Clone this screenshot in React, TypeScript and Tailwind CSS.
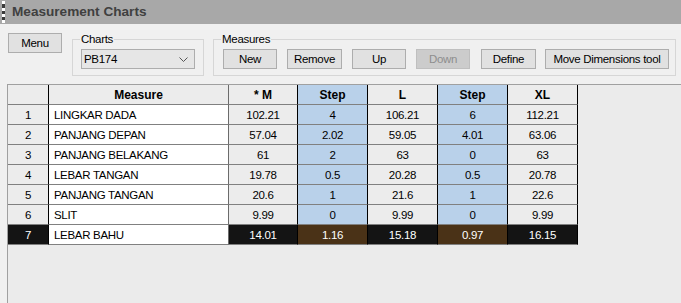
import React from 'react';

type Row = { n: string; name: string; vals: string[]; selected?: boolean };

const rows: Row[] = [
  { n: '1', name: 'LINGKAR DADA', vals: ['102.21', '4', '106.21', '6', '112.21'] },
  { n: '2', name: 'PANJANG DEPAN', vals: ['57.04', '2.02', '59.05', '4.01', '63.06'] },
  { n: '3', name: 'PANJANG BELAKANG', vals: ['61', '2', '63', '0', '63'] },
  { n: '4', name: 'LEBAR TANGAN', vals: ['19.78', '0.5', '20.28', '0.5', '20.78'] },
  { n: '5', name: 'PANJANG TANGAN', vals: ['20.6', '1', '21.6', '1', '22.6'] },
  { n: '6', name: 'SLIT', vals: ['9.99', '0', '9.99', '0', '9.99'] },
  { n: '7', name: 'LEBAR BAHU', vals: ['14.01', '1.16', '15.18', '0.97', '16.15'], selected: true },
];

const cell = 'h-[20px] flex items-center border-b border-b-[#808080] border-r';

// value columns: *M, Step, L, Step, XL
const valCls = [
  'w-[69px] bg-[#ececec] border-r-black justify-center',
  'w-[70px] bg-[#b9d1ea] border-r-black justify-center',
  'w-[70px] bg-[#ececec] border-r-black justify-center',
  'w-[70px] bg-[#b9d1ea] border-r-black justify-center',
  'w-[70px] bg-[#ececec] border-r-black justify-center',
];
const valSel = [
  'w-[69px] bg-[#141414] text-white border-r-black justify-center',
  'w-[70px] bg-[#4a3217] text-white border-r-black justify-center',
  'w-[70px] bg-[#141414] text-white border-r-black justify-center',
  'w-[70px] bg-[#4a3217] text-white border-r-black justify-center',
  'w-[70px] bg-[#141414] text-white border-r-black justify-center',
];

const Btn = ({ label, w, disabled }: { label: string; w: string; disabled?: boolean }) => (
  <div
    className={`${w} h-[20px] flex items-center justify-center whitespace-nowrap border ${
      disabled ? 'bg-[#cccccc] border-[#bfbfbf] text-[#8e8e8e]' : 'bg-[#e1e1e1] border-[#adadad] text-black'
    }`}
  >
    {label}
  </div>
);

export default function App() {
  return (
    <div className="w-[681px] h-[303px] flex flex-col bg-[#f0f0f0] text-[11.5px] tracking-[-0.3px] leading-[14px] text-black font-['Liberation_Sans',Arial,sans-serif] overflow-hidden">
      {/* title bar */}
      <div className="h-[24px] shrink-0 flex items-center bg-[#a8a8a8]">
        <div className="ml-[2px] h-[22px] w-[3px] border-l-[3px] border-dotted border-white bg-[#3a3a3a]" />
        <span className="ml-[7px] text-[13.6px] tracking-normal font-bold text-[#404040]">Measurement Charts</span>
      </div>

      {/* toolbar */}
      <div className="flex items-start pt-[9px] pl-[8px]">
        <Btn label="Menu" w="w-[54px]" />

        <fieldset className="ml-[10px] w-[132px] border border-[#d6d6d6] pl-[8px] pr-[8px] pt-[4px] pb-[6px]">
          <legend className="ml-[-1px] px-[1px] leading-[12px]">Charts</legend>
          <div className="w-[114px] h-[20px] flex items-center justify-between border border-[#adadad] bg-[#e6e6e6] pl-[2px] pr-[6px]">
            <span>PB174</span>
            <svg width="9" height="6" viewBox="0 0 9 6" className="mt-[1px]">
              <path d="M0.5 0.5 L4.5 4.5 L8.5 0.5" fill="none" stroke="#555" strokeWidth="1" />
            </svg>
          </div>
        </fieldset>

        <fieldset className="ml-[9px] w-[463px] border border-[#d6d6d6] pl-[9px] pt-[4px] pb-[6px]">
          <legend className="ml-[-2px] px-[1px] leading-[12px]">Measures</legend>
          <div className="flex items-center">
            <Btn label="New" w="w-[54px]" />
            <div className="ml-[10px]"><Btn label="Remove" w="w-[55px]" /></div>
            <div className="ml-[10px]"><Btn label="Up" w="w-[54px]" /></div>
            <div className="ml-[10px]"><Btn label="Down" w="w-[54px]" disabled /></div>
            <div className="ml-[11px]"><Btn label="Define" w="w-[55px]" /></div>
            <div className="ml-[9px]"><Btn label="Move Dimensions tool" w="w-[124px]" /></div>
          </div>
        </fieldset>
      </div>

      {/* grid */}
      <div className="mt-[8px] ml-[7px] flex-1 border-l border-t border-[#a0a0a0] bg-[#ebebeb]">
        <div className="flex font-bold text-[12px] tracking-normal">
          <div className={`${cell} w-[41px] bg-[#ececec] border-r-black`} />
          <div className={`${cell} w-[180px] bg-[#ececec] border-r-[#6b6b6b] justify-center`}>Measure</div>
          <div className={`${cell} ${valCls[0]}`}>* M</div>
          <div className={`${cell} ${valCls[1]}`}>Step</div>
          <div className={`${cell} ${valCls[2]}`}>L</div>
          <div className={`${cell} ${valCls[3]}`}>Step</div>
          <div className={`${cell} ${valCls[4]}`}>XL</div>
        </div>
        {rows.map((r) => (
          <div key={r.n} className="flex">
            <div
              className={`${cell} w-[41px] justify-center border-r-black ${
                r.selected ? 'bg-[#141414] text-white' : 'bg-[#ececec]'
              }`}
            >
              {r.n}
            </div>
            <div className={`${cell} w-[180px] bg-white border-r-[#6b6b6b] pl-[5px]`}>{r.name}</div>
            {r.vals.map((v, i) => (
              <div key={i} className={`${cell} ${r.selected ? valSel[i] : valCls[i]}`}>
                {v}
              </div>
            ))}
          </div>
        ))}
      </div>
    </div>
  );
}
